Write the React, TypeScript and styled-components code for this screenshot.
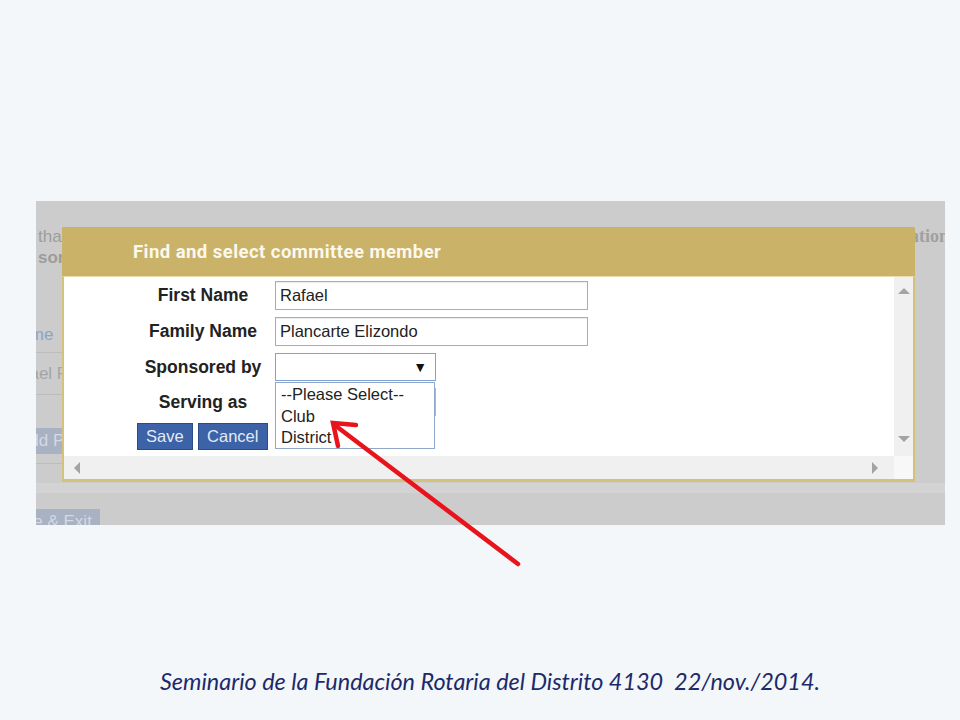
import React from 'react'
import styled, { createGlobalStyle } from 'styled-components'

const GlobalStyle = createGlobalStyle`
  html, body {
    margin: 0;
    padding: 0;
    background: #f4f7fa;
  }
  body {
    font-family: 'Liberation Sans', Arial, sans-serif;
  }
`

const Page = styled.div`
  position: relative;
  width: 960px;
  height: 720px;
  padding: 201px 0 0 36px;
  box-sizing: border-box;
  overflow: hidden;
`

const Shot = styled.div`
  position: relative;
  width: 909px;
  height: 324px;
  background: #cccccc;
  overflow: hidden;
`

// page behind the modal
const BgPage = styled.div`
  display: flex;
  flex-direction: column;
  padding-top: 25px;
  font-family: 'Liberation Sans', Arial, sans-serif;
  font-size: 17px;
  color: #9c9c9c;
`

const BgLine = styled.div<{ bold?: boolean }>`
  display: flex;
  justify-content: space-between;
  height: 21px;
  line-height: 21px;
  padding-left: 2px;
  font-weight: ${(p) => (p.bold ? 700 : 400)};
  white-space: nowrap;
`

const BgSerif = styled.span`
  font-family: 'Liberation Serif', 'Times New Roman', serif;
  font-weight: 700;
  font-size: 18px;
  margin-right: -4px;
  color: #a0a0a0;
`

const BgList = styled.div`
  width: 420px;
  margin-top: 49px;
  display: flex;
  flex-direction: column;
`

const BgRow = styled.div<{ h: number; link?: boolean; top?: number }>`
  height: ${(p) => p.h}px;
  box-sizing: border-box;
  border-bottom: 1px solid #bcbcbc;
  display: flex;
  align-items: ${(p) => (p.top ? 'flex-start' : 'center')};
  padding-top: ${(p) => p.top || 0}px;
  color: ${(p) => (p.link ? '#8ea3c6' : '#a4a4a4')};
  white-space: nowrap;
`

const Clip = styled.span<{ shift: number }>`
  margin-left: ${(p) => -p.shift}px;
`

const BgButton = styled.div<{ shift: number }>`
  height: 26px;
  line-height: 26px;
  padding: 0 8px;
  margin-left: ${(p) => -p.shift}px;
  background: #a8b2c3;
  color: #d4d9e2;
  font-size: 17px;
  white-space: nowrap;
`

const BgBand = styled.div`
  height: 10px;
  margin-top: 19px;
  background: #d3d3d3;
`

const BgFoot = styled.div`
  margin-top: 16px;
  display: flex;
`

// the modal
const Dialog = styled.div`
  position: absolute;
  left: 26px;
  top: 26px;
  width: 853px;
  height: 255px;
  display: flex;
  flex-direction: column;
`

const Header = styled.div`
  height: 49px;
  flex: none;
  background: #cbb269;
  display: flex;
  align-items: center;
  padding-left: 71px;
  font-family: Roboto, 'Liberation Sans', sans-serif;
  font-weight: 700;
  font-size: 18.5px;
  letter-spacing: 0.45px;
  color: #fbf8ee;
`

const Body = styled.div`
  flex: 1;
  background: #ffffff;
  border: 2px solid #d6c07a;
  border-top: 1px solid #e9dcae;
  border-bottom-width: 3px;
  display: grid;
  grid-template-columns: 1fr 19px;
  grid-template-rows: 1fr 23px;
`

const Content = styled.div`
  padding: 4px 0 0 74px;
  display: grid;
  grid-template-columns: 130px 313px;
  grid-template-rows: 29px 29px 28px 28px 27px;
  row-gap: 7px;
  column-gap: 7px;
  align-items: center;
`

const Label = styled.div`
  text-align: center;
  font-family: 'Liberation Sans', Arial, sans-serif;
  font-weight: 700;
  font-size: 17.5px;
  color: #222222;
  white-space: nowrap;
`

const TextInput = styled.div`
  height: 29px;
  box-sizing: border-box;
  border: 1px solid #acacac;
  box-shadow: inset 0 1px 1px rgba(0, 0, 0, 0.08);
  padding-left: 4px;
  display: flex;
  align-items: center;
  font-size: 16.5px;
  color: #222222;
`

const SelectWrap = styled.div`
  position: relative;
  width: 161px;
`

const Select = styled.div<{ focused?: boolean }>`
  height: 28px;
  box-sizing: border-box;
  border: 1px solid ${(p) => (p.focused ? '#7ea3d6' : '#b5b5b5')};
  display: flex;
  align-items: center;
  justify-content: flex-end;
  padding-right: 8px;
  font-size: 14px;
  color: #111111;
`

const Dropdown = styled.div`
  position: absolute;
  left: 0;
  top: 29px;
  width: 160px;
  height: 67px;
  box-sizing: border-box;
  background: #ffffff;
  border: 1px solid #8fa8cc;
  padding: 1px 0 0 5px;
  z-index: 2;
`

const Option = styled.div`
  height: 21.5px;
  line-height: 21.5px;
  font-size: 16.5px;
  color: #222222;
`

const Buttons = styled.div`
  display: flex;
  gap: 5px;
  margin-left: -1px;
`

const Button = styled.div<{ w: number }>`
  width: ${(p) => p.w}px;
  height: 27px;
  box-sizing: border-box;
  background: #3c62a7;
  border: 1px solid #2c4c86;
  color: #e4eaf4;
  font-size: 16.5px;
  display: flex;
  align-items: center;
  justify-content: center;
`

const Scroll = styled.div<{ dir: 'v' | 'h' }>`
  background: #f0f0f0;
  display: flex;
  flex-direction: ${(p) => (p.dir === 'v' ? 'column' : 'row')};
  justify-content: space-between;
  align-items: center;
  padding: ${(p) => (p.dir === 'v' ? '9px 0 12px' : '0 14px 0 8px')};
`

const Corner = styled.div`
  background: #f8f8f8;
`

const ArrowLayer = styled.svg`
  position: absolute;
  left: 0;
  top: 0;
  z-index: 5;
  pointer-events: none;
`

const Footer = styled.div`
  margin: 143px 0 0 -36px;
  width: 980px;
  text-align: center;
  font-family: Lato, 'Open Sans', sans-serif;
  font-style: italic;
  font-size: 23.4px;
  line-height: 26px;
  color: #1b2a6b;
  white-space: pre;
`

const Tri = ({ d }: { d: 'up' | 'down' | 'left' | 'right' }) => {
  const pts = {
    up: '0,8 6,2 12,8',
    down: '0,2 6,8 12,2',
    left: '8,0 2,6 8,12',
    right: '2,0 8,6 2,12',
  }[d]
  const vertical = d === 'up' || d === 'down'
  return (
    <svg width={vertical ? 12 : 10} height={vertical ? 10 : 12} viewBox={vertical ? '0 0 12 10' : '0 0 10 12'}>
      <polygon points={pts} fill="#a3a3a3" />
    </svg>
  )
}

export default function App() {
  return (
    <Page>
      <GlobalStyle />
      <Shot>
        <BgPage>
          <BgLine>
            <span>that the committee members are registered in My Rotary before the</span>
            <BgSerif>information</BgSerif>
          </BgLine>
          <BgLine bold>
            <span>sor</span>
          </BgLine>
          <BgList>
            <BgRow h={36} link>
              <Clip shift={28}>Name</Clip>
            </BgRow>
            <BgRow h={42}>
              <Clip shift={33}>Rafael Plancarte</Clip>
            </BgRow>
            <BgRow h={69} top={33}>
              <BgButton shift={26}>Add Prospect</BgButton>
            </BgRow>
          </BgList>
          <BgBand />
          <BgFoot>
            <BgButton shift={40}>Save &amp; Exit</BgButton>
          </BgFoot>
        </BgPage>

        <Dialog>
          <Header>Find and select committee member</Header>
          <Body>
            <Content>
              <Label>First Name</Label>
              <TextInput>Rafael</TextInput>
              <Label>Family Name</Label>
              <TextInput>Plancarte Elizondo</TextInput>
              <Label>Sponsored by</Label>
              <SelectWrap>
                <Select focused>▼</Select>
                <Dropdown>
                  <Option>--Please Select--</Option>
                  <Option>Club</Option>
                  <Option>District</Option>
                </Dropdown>
              </SelectWrap>
              <Label>Serving as</Label>
              <SelectWrap>
                <Select />
              </SelectWrap>
              <Buttons>
                <Button w={56}>Save</Button>
                <Button w={71}>Cancel</Button>
              </Buttons>
            </Content>
            <Scroll dir="v">
              <Tri d="up" />
              <Tri d="down" />
            </Scroll>
            <Scroll dir="h">
              <Tri d="left" />
              <Tri d="right" />
            </Scroll>
            <Corner />
          </Body>
        </Dialog>
      </Shot>

      <Footer>Seminario de la Fundación Rotaria del Distrito 4130  22/nov./2014.</Footer>

      <ArrowLayer width={960} height={720} viewBox="0 0 960 720">
        <line x1={518} y1={564} x2={336} y2={426} stroke="#e8131b" strokeWidth={4.5} strokeLinecap="round" />
        <polyline
          points="356,425 333,423 338,446"
          fill="none"
          stroke="#e8131b"
          strokeWidth={4.5}
          strokeLinecap="round"
          strokeLinejoin="miter"
        />
      </ArrowLayer>
    </Page>
  )
}
